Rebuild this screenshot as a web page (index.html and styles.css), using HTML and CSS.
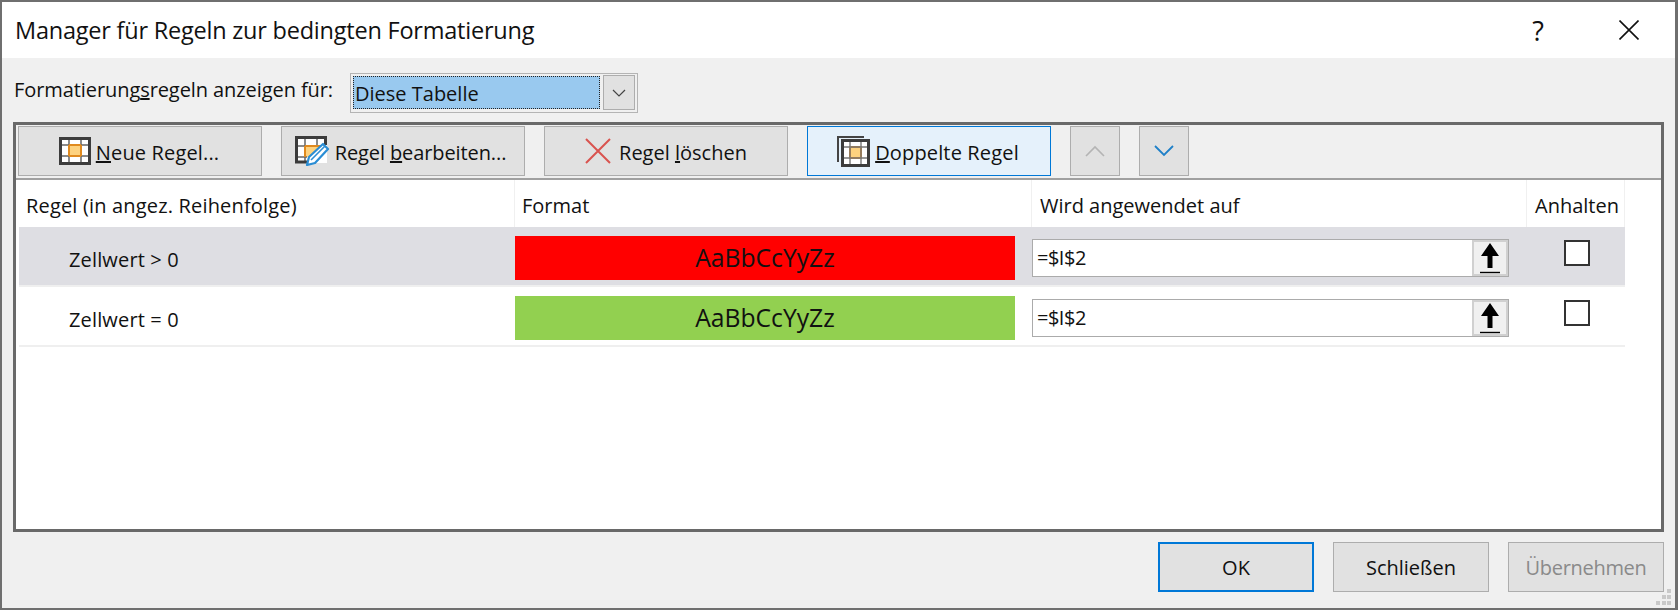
FILE: index.html
```html
<!DOCTYPE html>
<html lang="de">
<head>
<meta charset="utf-8">
<title>Manager für Regeln zur bedingten Formatierung</title>
<link rel="stylesheet" href="styles.css">
</head>
<body>
<div class="dialog">
  <header class="titlebar">
    <span class="title">Manager für Regeln zur bedingten Formatierung</span>
    <span class="help">?</span>
    <svg class="close" width="20" height="20" viewBox="0 0 20 20"><path d="M0.5 0.5 19.5 19.5M19.5 0.5 0.5 19.5" stroke="#111" stroke-width="1.6" fill="none"/></svg>
  </header>
  <div class="scope">
    <span class="scope-label">Formatierung<u>s</u>regeln anzeigen für:</span>
    <div class="combo">
      <span class="combo-value">Diese Tabelle</span>
      <span class="combo-btn"><svg width="14" height="8" viewBox="0 0 14 8"><path d="M1 1 7 7 13 1" stroke="#444" stroke-width="1.2" fill="none"/></svg></span>
    </div>
  </div>
  <section class="panel">
    <div class="toolbar">
      <button class="btn tool">
        <svg width="32" height="28" viewBox="0 0 32 28"><rect x="1.5" y="1.5" width="29" height="25" fill="#fff" stroke="#3c3c3c" stroke-width="3"/><rect x="10" y="8" width="12" height="11" fill="#fdd27f"/><path d="M10 3V25M22 3V25M3 8H29M3 19H29" stroke="#666" stroke-width="1.5"/><path d="M10 8H22M10 19H22M10 8V19M22 8V19" stroke="#e08a1e" stroke-width="2" fill="none"/></svg>
        <span class="label"><u>N</u>eue Regel...</span>
      </button>
      <button class="btn tool tool-edit">
        <svg width="36" height="30" viewBox="0 0 36 30"><path d="M0 0H32V27H0Z" fill="#fff"/><rect x="10" y="10" width="15" height="11" fill="#fdd27f"/><path d="M10 3V25M22 3V10M3 10H30M3 21H12" stroke="#666" stroke-width="1.5"/><path d="M10 10H25M10 10V21" stroke="#e08a1e" stroke-width="2" fill="none"/><path d="M13 26H1.500V1.500H30.500V9" stroke="#3c3c3c" stroke-width="3" fill="none"/><path d="M12 29 14 21 28 8 33 13 20 27Z" fill="#fff" stroke="#2a8dd4" stroke-width="2.2" stroke-linejoin="round"/><path d="M16 24 30 10" stroke="#2a8dd4" stroke-width="1.6"/></svg>
        <span class="label">Regel <u>b</u>earbeiten...</span>
      </button>
      <button class="btn tool tool-delete">
        <svg width="26" height="26" viewBox="0 0 26 26"><path d="M1 1 25 25M25 1 1 25" stroke="#d9534f" stroke-width="2" fill="none"/></svg>
        <span class="label">Regel <u>l</u>öschen</span>
      </button>
      <button class="btn tool hot">
        <svg width="33" height="31" viewBox="0 0 33 31"><path d="M1 26V1H27" stroke="#444" stroke-width="2" fill="none"/><rect x="5.500" y="4.500" width="26" height="25" fill="#fff" stroke="#3c3c3c" stroke-width="3"/><rect x="13" y="11" width="11" height="11" fill="#fdd27f" stroke="#e08a1e" stroke-width="2"/><path d="M13 6V28M24 6V28M7 11H30M7 22H30" stroke="#777" stroke-width="1.4"/></svg>
        <span class="label"><u>D</u>oppelte Regel</span>
      </button>
      <button class="btn move" aria-label="Nach oben">
        <svg width="20" height="12" viewBox="0 0 20 12"><path d="M1 11 10 2 19 11" stroke="#b4b4b4" stroke-width="1.6" fill="none"/></svg>
      </button>
      <button class="btn move" aria-label="Nach unten">
        <svg width="20" height="12" viewBox="0 0 20 12"><path d="M1 1 10 10 19 1" stroke="#1f80c8" stroke-width="1.8" fill="none"/></svg>
      </button>
    </div>
    <div class="rules">
      <div class="row head">
        <div class="cell col-rule">Regel (in angez. Reihenfolge)</div>
        <div class="cell col-format">Format</div>
        <div class="cell">Wird angewendet auf</div>
        <div class="cell">Anhalten</div>
      </div>
      <div class="row rule selected">
        <div class="cond">Zellwert &gt; 0</div>
        <div class="swatch red">AaBbCcYyZz</div>
        <div class="range"><span class="range-text">=$I$2</span><span class="range-btn"><svg width="22" height="32" viewBox="0 0 22 32"><path d="M11 1 20 14H13.500V26H8.500V14H2Z" fill="#000"/><path d="M1 30.500H21" stroke="#000" stroke-width="1.4"/></svg></span></div>
        <div class="check-cell"><span class="check"></span></div>
      </div>
      <div class="row rule">
        <div class="cond">Zellwert = 0</div>
        <div class="swatch green">AaBbCcYyZz</div>
        <div class="range"><span class="range-text">=$I$2</span><span class="range-btn"><svg width="22" height="32" viewBox="0 0 22 32"><path d="M11 1 20 14H13.500V26H8.500V14H2Z" fill="#000"/><path d="M1 30.500H21" stroke="#000" stroke-width="1.4"/></svg></span></div>
        <div class="check-cell"><span class="check"></span></div>
      </div>
    </div>
  </section>
  <footer class="footer">
    <button class="btn action default">OK</button>
    <button class="btn action">Schließen</button>
    <button class="btn action disabled">Übernehmen</button>
  </footer>
  <svg class="grip" width="16" height="17" viewBox="0 0 16 17"><path d="M11 0h4v4h-4zM6 6h4v4H6zM11 6h4v4h-4zM0 12h4v4H0zM6 12h4v4H6zM11 12h4v4h-4z" fill="#c9c9c9"/></svg>
</div>
</body>
</html>
```
FILE: styles.css
```css
* { box-sizing: border-box; }
html, body { margin: 0; padding: 0; }
body {
  width: 1678px;
  height: 610px;
  overflow: hidden;
  font-family: "Open Sans", "Noto Sans", "Liberation Sans", sans-serif;
  font-size: 20px;
  color: #111;
}
.dialog {
  position: relative;
  width: 1678px;
  height: 610px;
  background: #f0f0f0;
  border-style: solid;
  border-color: #6f6f6f;
  border-width: 2px 3px 2px 2px;
  display: flex;
  flex-direction: column;
}
.titlebar {
  height: 56px;
  flex: none;
  background: #fff;
  display: flex;
  align-items: center;
  padding-left: 13px;
}
.title { font-size: 23.5px; flex: 1; letter-spacing: -0.22px; }
.help { font-size: 27px; margin-right: 75px; }
.close { margin-right: 36px; }
.scope {
  height: 64px;
  flex: none;
  display: flex;
  align-items: center;
  padding-left: 12px;
}
.scope-label { width: 336px; padding-bottom: 2px; letter-spacing: -0.08px; white-space: nowrap; }
.combo {
  width: 288px;
  height: 40px;
  margin-top: 5px;
  border: 1px solid #b4b4b4;
  background: #f0f0f0;
  padding: 2px;
  display: flex;
  align-items: center;
  gap: 3px;
}
.combo-value {
  width: 251px;
  height: 33px;
  background: #99c9ef;
  border: 1px dotted #222;
  display: flex;
  align-items: center;
  padding-left: 1px;
  padding-top: 2px;
}
.combo-btn {
  width: 33px;
  height: 35px;
  background: #e1e1e1;
  border: 1px solid #adadad;
  display: flex;
  align-items: center;
  justify-content: center;
}
.panel {
  flex: none;
  height: 410px;
  margin: 0 11px;
  border: 3px solid #696969;
  background: #fff;
  display: flex;
  flex-direction: column;
}
.toolbar {
  flex: none;
  height: 55px;
  padding: 1px 0 0 2px;
  background: #f0f0f0;
  border-bottom: 2px solid #a0a0a0;
  display: flex;
  gap: 19px;
}
.btn {
  font: inherit;
  color: #111;
  background: #e1e1e1;
  border: 1px solid #adadad;
  height: 50px;
  padding: 0;
  display: flex;
  align-items: center;
  justify-content: center;
}
.tool { width: 244px; gap: 5px; padding-right: 2px; letter-spacing: 0.15px; }
.tool-edit { gap: 4px; padding-right: 5px; letter-spacing: -0.1px; }
.tool-delete { gap: 8px; padding-right: 0; letter-spacing: 0; }
.label { padding-top: 3px; }
.hot { background: #e5f1fb; border-color: #0078d7; }
.move { width: 50px; }
.rules { padding-left: 3px; }
.row {
  display: grid;
  grid-template-columns: 496px 517px 495px 98px;
  width: 1606px;
}
.head { height: 47px; }
.head .cell {
  display: flex;
  align-items: center;
  padding: 3px 0 0 8px;
  border-right: 1px solid #f0f0f0;
  white-space: nowrap;
}
.head .col-rule { padding-left: 7px; letter-spacing: 0.17px; }
.head .col-format { padding-left: 7px; }
.rule { align-items: center; border-bottom: 2px solid #efefef; height: 60px; padding-top: 3px; }
.rule.selected { background: #dedee3; height: 60px; padding-top: 3px; }
.cond { padding: 4px 0 0 50px; letter-spacing: 0.15px; }
.swatch {
  width: 500px;
  height: 44px;
  font-size: 24.700px;
  display: flex;
  align-items: center;
  justify-content: center;
}
.red { background: #ff0000; }
.green { background: #92d050; }
.range {
  width: 477px;
  height: 38px;
  background: #fff;
  border: 1px solid #ababab;
  display: flex;
  align-items: center;
  justify-content: space-between;
  padding-left: 4px;
}
.range-text { letter-spacing: -0.5px; }
.range-btn {
  width: 36px;
  height: 36px;
  background: #f0f0f0;
  border: 2px solid #d0d0d0;
  display: flex;
  align-items: center;
  justify-content: center;
}
.check-cell { display: flex; justify-content: center; padding: 0 0 9px 2px; }
.check {
  width: 26px;
  height: 26px;
  background: #fff;
  border: 2px solid #333;
  display: block;
}
.footer {
  flex: 1;
  display: flex;
  justify-content: flex-end;
  gap: 19px;
  padding: 10px 11px 0 0;
}
.action { width: 156px; }
.default { border: 2px solid #0078d7; }
.disabled { color: #8a8a8a; letter-spacing: -0.3px; }
.grip { position: absolute; right: 3px; bottom: 2px; }
```
